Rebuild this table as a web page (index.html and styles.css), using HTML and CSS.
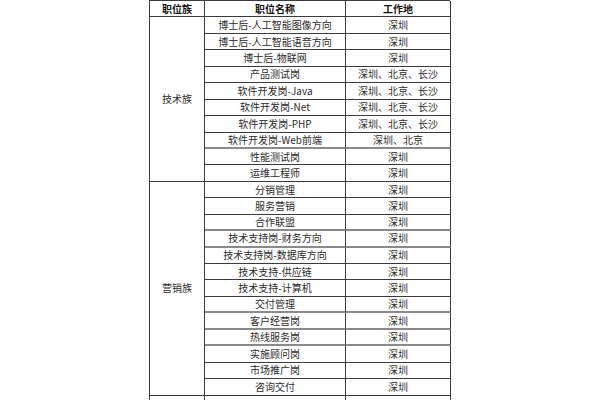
FILE: index.html
```html
<!DOCTYPE html>
<html lang="zh">
<head>
<meta charset="utf-8">
<title>职位表</title>
<link rel="stylesheet" href="styles.css">
</head>
<body>
<div class="frame">
<div class="sheet">
  <div class="c hd">职位族</div>
  <div class="c hd">职位名称</div>
  <div class="c hd last">工作地</div>

  <div class="c fam tech">技术族</div>
  <div class="c">博士后-人工智能图像方向</div><div class="c last">深圳</div>
  <div class="c">博士后-人工智能语音方向</div><div class="c last">深圳</div>
  <div class="c">博士后-物联网</div><div class="c last">深圳</div>
  <div class="c">产品测试岗</div><div class="c last">深圳、北京、长沙</div>
  <div class="c">软件开发岗-Java</div><div class="c last">深圳、北京、长沙</div>
  <div class="c">软件开发岗-Net</div><div class="c last">深圳、北京、长沙</div>
  <div class="c">软件开发岗-PHP</div><div class="c last">深圳、北京、长沙</div>
  <div class="c soft">软件开发岗-Web前端</div><div class="c last soft">深圳、北京</div>
  <div class="c">性能测试岗</div><div class="c last">深圳</div>
  <div class="c">运维工程师</div><div class="c last">深圳</div>

  <div class="c fam sales">营销族</div>
  <div class="c">分销管理</div><div class="c last">深圳</div>
  <div class="c">服务营销</div><div class="c last">深圳</div>
  <div class="c soft">合作联盟</div><div class="c last soft">深圳</div>
  <div class="c soft">技术支持岗-财务方向</div><div class="c last soft">深圳</div>
  <div class="c">技术支持岗-数据库方向</div><div class="c last">深圳</div>
  <div class="c">技术支持-供应链</div><div class="c last">深圳</div>
  <div class="c">技术支持-计算机</div><div class="c last">深圳</div>
  <div class="c soft">交付管理</div><div class="c last soft">深圳</div>
  <div class="c soft">客户经营岗</div><div class="c last soft">深圳</div>
  <div class="c soft">热线服务岗</div><div class="c last soft">深圳</div>
  <div class="c">实施顾问岗</div><div class="c last">深圳</div>
  <div class="c">市场推广岗</div><div class="c last">深圳</div>
  <div class="c">咨询交付</div><div class="c last">深圳</div>

  <div class="c fam more"></div>
  <div class="c"></div><div class="c last"></div>
</div>
</div>
</body>
</html>
```
FILE: styles.css
```css
html, body {
  margin: 0;
  padding: 0;
  background: #ffffff;
  overflow: hidden;
}
body {
  width: 600px;
  height: 400px;
}
.frame {
  height: 400px;
  overflow: hidden;
}
.sheet {
  margin-left: 149px;
  width: 301px;
  display: grid;
  grid-template-columns: 55px 141px 105px;
  grid-auto-rows: 16.45px;
  border-top: 1px solid #3a3a3a;
  border-left: 1px solid #3a3a3a;
  box-sizing: border-box;
  font-family: "Noto Sans CJK SC", "Noto Sans", sans-serif;
  font-size: 10px;
  color: #2a2a2a;
}
.c {
  box-sizing: border-box;
  border-right: 1px solid #3a3a3a;
  border-bottom: 1px solid #3a3a3a;
  display: flex;
  align-items: center;
  justify-content: center;
  line-height: 14px;
  white-space: nowrap;
  overflow: hidden;
}
.c.soft {
  border-bottom: 2px solid #8a8a8a;
}
.hd {
  font-weight: bold;
  color: #111;
}
.fam.tech {
  grid-row: span 10;
}
.fam.sales {
  grid-row: span 13;
}
.fam.more {
  grid-row: span 1;
}
```
